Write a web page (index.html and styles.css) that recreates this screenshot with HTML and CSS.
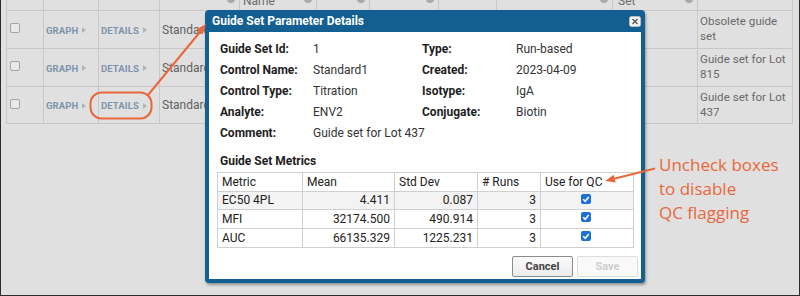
FILE: index.html
```html
<!DOCTYPE html>
<html>
<head>
<meta charset="utf-8">
<link rel="stylesheet" href="styles.css">
</head>
<body>
<div class="frame">
  <div class="grid">
    <div class="hc"></div>
    <div class="hc"></div>
    <div class="hc"></div>
    <div class="hc"><i class="dot"></i></div>
    <div class="hc"><span>Name</span><i class="dot"></i></div>
    <div class="hc"><i class="dot"></i></div>
    <div class="hc"><i class="dot"></i></div>
    <div class="hc"></div>
    <div class="hc"><i class="dot"></i></div>
    <div class="hc"><span>Set</span><i class="dot"></i></div>
    <div class="hc"></div>

    <div class="c cb"><i class="box"></i></div>
    <div class="c lnk">GRAPH<i class="tri"></i></div>
    <div class="c lnk">DETAILS<i class="tri"></i></div>
    <div class="c txt">Standard1</div>
    <div class="c"></div><div class="c"></div><div class="c"></div><div class="c"></div><div class="c"></div><div class="c"></div>
    <div class="c cmt">Obsolete guide set</div>

    <div class="c cb"><i class="box"></i></div>
    <div class="c lnk">GRAPH<i class="tri"></i></div>
    <div class="c lnk">DETAILS<i class="tri"></i></div>
    <div class="c txt">Standard1</div>
    <div class="c"></div><div class="c"></div><div class="c"></div><div class="c"></div><div class="c"></div><div class="c"></div>
    <div class="c cmt">Guide set for Lot 815</div>

    <div class="c cb"><i class="box"></i></div>
    <div class="c lnk">GRAPH<i class="tri"></i></div>
    <div class="c lnk">DETAILS<i class="tri"></i></div>
    <div class="c txt">Standard1</div>
    <div class="c"></div><div class="c"></div><div class="c"></div><div class="c"></div><div class="c"></div><div class="c"></div>
    <div class="c cmt">Guide set for Lot 437</div>
  </div>

  <div class="modal">
    <div class="mhead">
      <span class="mtitle">Guide Set Parameter Details</span>
      <span class="close"><svg width="12" height="11" viewBox="0 0 12 11"><rect x="0.5" y="0.5" width="11" height="10" rx="2" fill="#f4f4f4" stroke="#bdbdbd"/><path d="M3.5 3 L8.5 8 M8.5 3 L3.5 8" stroke="#555" stroke-width="1.3"/></svg></span>
    </div>
    <div class="mbody">
      <div class="fields">
        <b>Guide Set Id:</b><span>1</span><b>Type:</b><span>Run-based</span>
        <b>Control Name:</b><span>Standard1</span><b>Created:</b><span>2023-04-09</span>
        <b>Control Type:</b><span>Titration</span><b>Isotype:</b><span>IgA</span>
        <b>Analyte:</b><span>ENV2</span><b>Conjugate:</b><span>Biotin</span>
        <b>Comment:</b><span class="wide">Guide set for Lot 437</span>
      </div>
      <div class="mt-title">Guide Set Metrics</div>
      <div class="mtable">
        <div class="th">Metric</div><div class="th">Mean</div><div class="th">Std Dev</div><div class="th"># Runs</div><div class="th">Use for QC</div>
        <div class="td alt">EC50 4PL</div><div class="td alt num">4.411</div><div class="td alt num">0.087</div><div class="td alt num">3</div><div class="td alt chk"><i class="qc"></i></div>
        <div class="td">MFI</div><div class="td num">32174.500</div><div class="td num">490.914</div><div class="td num">3</div><div class="td chk"><i class="qc"></i></div>
        <div class="td">AUC</div><div class="td num">66135.329</div><div class="td num">1225.231</div><div class="td num">3</div><div class="td chk"><i class="qc"></i></div>
      </div>
      <div class="buttons">
        <button class="btn">Cancel</button>
        <button class="btn off" disabled>Save</button>
      </div>
    </div>
  </div>

  <div class="note">Uncheck boxes<br>to disable<br>QC flagging</div>

  <svg class="annot" width="800" height="296" viewBox="0 0 800 296">
    <rect x="90.5" y="92.5" width="61" height="26" rx="11" fill="none" stroke="#e9683b" stroke-width="2"/>
    <line x1="148" y1="95" x2="200" y2="32" stroke="#e9683b" stroke-width="2"/>
    <polygon points="206,24 202.7,34.3 196.5,29.2" fill="#e9683b"/>
    <line x1="655" y1="168.5" x2="614" y2="178.8" stroke="#e9683b" stroke-width="2"/>
    <polygon points="605,181 615.7,182.5 613.7,174.7" fill="#e9683b"/>
  </svg>
</div>
</body>
</html>
```

FILE: styles.css
```css
* { box-sizing: border-box; }
html, body { margin: 0; padding: 0; }
body { width: 800px; height: 296px; overflow: hidden; font-family: Roboto, "Liberation Sans", sans-serif; }

.frame {
  position: relative;
  width: 800px;
  height: 296px;
  background: #e0e0e0;
  border: 1px solid #2c2c2c;
  border-top: none;
  overflow: hidden;
}

/* background grid */
.grid {
  display: grid;
  grid-template-columns: 37px 55px 61px 80px 77px 53px 69px 58px 116px 85px 95px;
  grid-template-rows: 24px 38px 38px 37px;
  margin: -13px 0 0 5px;
  width: 787px;
  border-left: 1px solid #c8c8c8;
}
.hc, .c {
  position: relative;
  border-right: 1px solid #c8c8c8;
  border-bottom: 1px solid #c8c8c8;
}
.hc {
  display: flex;
  align-items: flex-end;
  padding: 0 0 1px 3px;
  font-size: 12px;
  line-height: 15px;
  color: #6a6a6a;
}
.hc:nth-child(10) { padding-left: 5px; }
.dot {
  position: absolute;
  right: 4px;
  top: 8px;
  width: 8px;
  height: 8px;
  border-radius: 50%;
  background: #a9a9a9;
}
.c { font-size: 12px; color: #666; }
.cb { padding: 12px 0 0 3px; }
.box {
  display: block;
  width: 10px;
  height: 10px;
  border: 1px solid #a3a3a3;
  border-radius: 2px;
  background: #e9e9e9;
}
.lnk {
  display: flex;
  align-items: center;
  padding: 1px 0 0 2px;
  font-size: 9.5px;
  font-weight: bold;
  color: #7d94ab;
  letter-spacing: 0.1px;
}
.tri {
  width: 0; height: 0;
  margin-left: 4px;
  border-top: 3px solid transparent;
  border-bottom: 3px solid transparent;
  border-left: 4px solid #b3b3b3;
}
.txt { display: flex; align-items: center; padding-left: 2px; font-size: 12px; color: #5f5f5f; white-space: nowrap; overflow: hidden; }
.cmt { padding: 3px 0 0 2px; line-height: 15px; font-size: 11.6px; color: #6a6a6a; }

/* modal */
.modal {
  position: absolute;
  left: 204px;
  top: 10px;
  width: 440px;
  height: 273px;
  padding: 0 4px 4px 4px;
  background: #135f91;
  border-radius: 4px;
  box-shadow: 1px 2px 3px rgba(0,0,0,0.35);
  display: flex;
  flex-direction: column;
}
.mhead {
  height: 22px;
  display: flex;
  align-items: center;
  justify-content: space-between;
  padding: 0 0 0 3px;
}
.mtitle { color: #fff; font-weight: bold; font-size: 12px; }
.close { display: flex; }
.mbody {
  flex: 1;
  background: #fff;
  padding: 7px 0 2px 0;
  display: flex;
  flex-direction: column;
}
.fields {
  display: grid;
  grid-template-columns: 93px 109px 94px 1fr;
  grid-auto-rows: 20.8px;
  align-items: center;
  padding-left: 11px;
  font-size: 12px;
  color: #333;
}
.fields b { color: #1e1e1e; }
.fields .wide { grid-column: span 3; }
.mt-title {
  margin-top: 10px;
  margin-bottom: 2px;
  padding-left: 11px;
  line-height: 17px;
  font-size: 12px;
  font-weight: bold;
  color: #1e1e1e;
}
.mtable {
  margin-left: 8px;
  width: 417px;
  display: grid;
  grid-template-columns: 85px 92px 83px 63px 93px;
  grid-template-rows: 19px 18px 19px 19px;
  border-left: 1px solid #cfcfcf;
  border-top: 1px solid #cfcfcf;
  font-size: 12px;
  color: #222;
}
.th, .td {
  display: flex;
  align-items: center;
  padding: 0 4px 0 4px;
  border-right: 1px solid #cfcfcf;
  border-bottom: 1px solid #cfcfcf;
}
.th { background: #fff; }
.td { background: #fff; }
.td.alt { background: #f3f3f3; }
.num { justify-content: flex-end; }
.chk { justify-content: center; align-items: flex-start; padding-top: 2px; }
.qc {
  display: block;
  width: 10px;
  height: 10px;
  margin-left: -3px;
  border-radius: 2px;
  background: #1b6fd9 url("data:image/svg+xml;utf8,<svg xmlns='http://www.w3.org/2000/svg' width='10' height='10'><path d='M2.2 5.2 L4.2 7.2 L7.8 3' fill='none' stroke='white' stroke-width='1.6'/></svg>") no-repeat center;
}
.buttons {
  margin-top: 8px;
  display: flex;
  justify-content: flex-end;
  gap: 4px;
  padding-right: 3px;
}
.btn {
  width: 61px;
  height: 21px;
  padding: 0;
  font-family: Roboto, "Liberation Sans", sans-serif;
  font-size: 11px;
  font-weight: bold;
  color: #444;
  border: 1px solid #8c8c8c;
  border-radius: 2px;
  background: linear-gradient(#fbfbfb, #ebebeb);
}
.btn.off { color: #cfcfcf; border-color: #dcdcdc; background: #f9f9f9; }

.note {
  position: absolute;
  left: 658px;
  top: 153px;
  font-family: "Open Sans", sans-serif;
  font-size: 17px;
  line-height: 24px;
  color: #e9683b;
}
.annot {
  position: absolute;
  left: -1px;
  top: 0;
  pointer-events: none;
}
```
